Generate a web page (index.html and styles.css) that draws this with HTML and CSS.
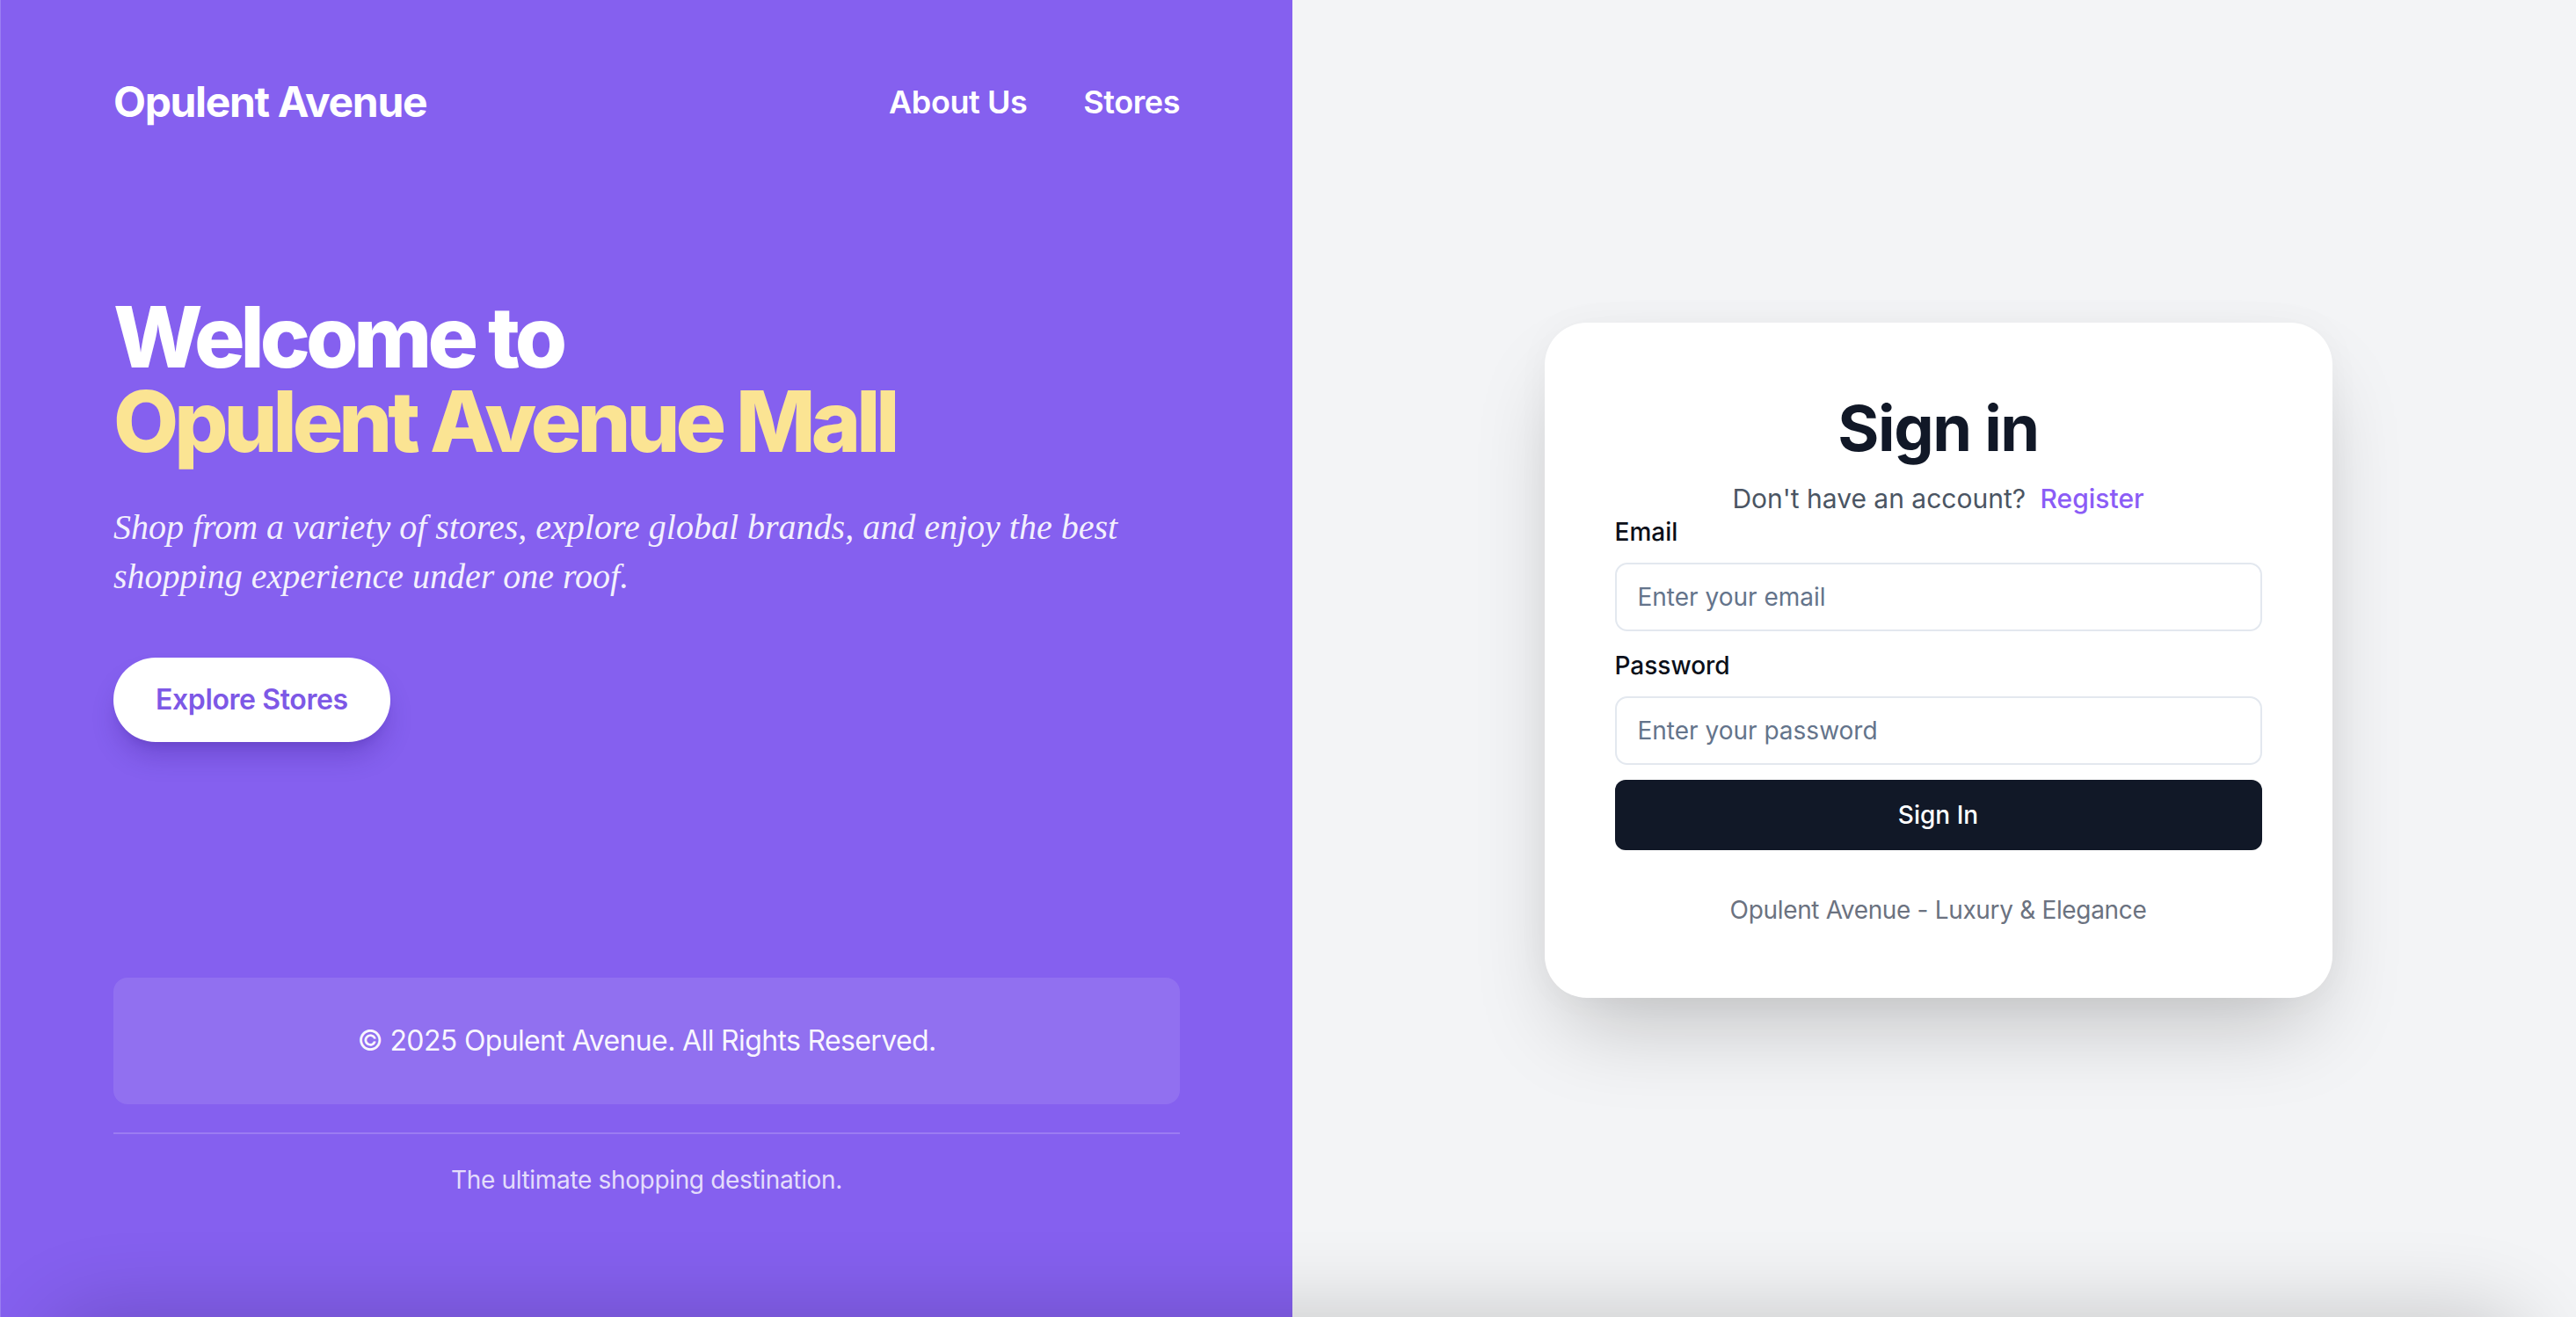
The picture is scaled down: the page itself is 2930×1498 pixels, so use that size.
FILE: index.html
```html
<!DOCTYPE html>
<html lang="en">
<head>
<meta charset="utf-8">
<title>Opulent Avenue - Sign in</title>
<link rel="stylesheet" href="styles.css">
</head>
<body>
<div class="page">
  <section class="hero-panel">
    <header class="topbar">
      <div class="logo">Opulent Avenue</div>
      <nav class="nav">
        <a class="nav-link" href="#">About Us</a>
        <a class="nav-link" href="#">Stores</a>
      </nav>
    </header>
    <div class="hero">
      <h1 class="hero-title"><span class="title-line">Welcome to</span><span class="title-line accent">Opulent Avenue Mall</span></h1>
      <p class="hero-text">Shop from a variety of stores, explore global brands, and enjoy the best shopping experience under one roof.</p>
      <a class="explore-btn" href="#">Explore Stores</a>
    </div>
    <footer class="hero-footer">
      <div class="copyright">© 2025 Opulent Avenue. All Rights Reserved.</div>
      <div class="tagline">The ultimate shopping destination.</div>
    </footer>
  </section>
  <section class="auth-panel">
    <div class="card">
      <h2 class="card-title">Sign in</h2>
      <p class="card-sub">Don't have an account? <a class="register" href="#">Register</a></p>
      <form class="form">
        <div class="field">
          <label class="label" for="email">Email</label>
          <input class="input" id="email" type="email" placeholder="Enter your email">
        </div>
        <div class="field field-pw">
          <label class="label" for="password">Password</label>
          <input class="input" id="password" type="password" placeholder="Enter your password">
        </div>
        <button class="submit" type="button">Sign In</button>
      </form>
      <p class="card-foot">Opulent Avenue - Luxury &amp; Elegance</p>
    </div>
  </section>
  <div class="bottom-shadow"></div>
</div>
</body>
</html>
```

FILE: styles.css
```css
* { box-sizing: border-box; }
html, body { margin: 0; padding: 0; }
body {
  font-family: Inter, "Noto Sans", sans-serif;
  overflow: hidden;
  background: #f3f4f6;
}
a { text-decoration: none; }

.page {
  position: relative;
  display: flex;
  width: 2930px;
  height: 1498px;
  overflow: hidden;
}

/* Left hero panel */
.hero-panel {
  width: 1470px;
  flex: none;
  display: flex;
  flex-direction: column;
  background: #8560ef;
  border-left: 1px solid #9a7ef2;
  padding: 84px 128px 136px 128px;
  color: #fff;
}
.topbar {
  display: flex;
  align-items: center;
  justify-content: space-between;
  height: 64px;
}
.logo {
  font-size: 48px;
  line-height: 64px;
  font-weight: 700;
  letter-spacing: -0.028em;
}
.nav { display: flex; gap: 64px; }
.nav-link {
  color: #fff;
  font-size: 36px;
  line-height: 56px;
  font-weight: 600;
  letter-spacing: -0.012em;
}
.hero { margin-top: 187px; }
.hero-title {
  margin: 0;
  font-size: 96px;
  line-height: 96px;
  font-weight: 800;
  letter-spacing: -0.052em;
}
.title-line { display: block; height: 96px; }
.accent { color: #fbe493; }
.hero-text {
  margin: 45px 0 0;
  font-family: "Liberation Serif", serif;
  font-style: italic;
  font-size: 40px;
  line-height: 56px;
  color: rgba(255,255,255,0.92);
}
.explore-btn {
  display: inline-block;
  margin-top: 64px;
  padding: 24px 48px;
  background: #fff;
  color: #7d58e6;
  border-radius: 999px;
  font-size: 32px;
  line-height: 48px;
  font-weight: 600;
  letter-spacing: -0.012em;
  box-shadow: 0 20px 30px -6px rgba(40,10,120,0.25), 0 8px 12px -8px rgba(40,10,120,0.2);
}
.hero-footer { margin-top: auto; }
.copyright {
  background: rgba(255,255,255,0.1);
  border-radius: 16px;
  padding: 48px;
  text-align: center;
  font-size: 32px;
  line-height: 48px;
  letter-spacing: -0.02em;
  color: rgba(255,255,255,0.95);
}
.tagline {
  margin-top: 32px;
  border-top: 2px solid rgba(255,255,255,0.18);
  padding-top: 32px;
  text-align: center;
  font-size: 28px;
  line-height: 40px;
  letter-spacing: -0.012em;
  color: rgba(255,255,255,0.8);
}

/* Right auth panel */
.auth-panel {
  flex: 1;
  display: flex;
  align-items: center;
  justify-content: center;
  padding-left: 9px;
  padding-top: 4px;
  background: #f3f4f6;
}
.card {
  width: 896px;
  background: #fff;
  border-radius: 48px;
  padding: 80px;
  box-shadow: 0 50px 100px -24px rgba(0,0,0,0.22), 0 0 40px rgba(0,0,0,0.03);
}
.card-title {
  margin: 0;
  text-align: center;
  font-size: 72px;
  line-height: 80px;
  font-weight: 700;
  letter-spacing: -0.02em;
  color: #111827;
}
.card-sub {
  margin: 22px 0 0;
  text-align: center;
  font-size: 30px;
  line-height: 36px;
  color: #4b5563;
}
.register {
  color: #8b5cf6;
  font-weight: 500;
  margin-left: 8px;
}
.form { display: flex; flex-direction: column; }
.field { display: flex; flex-direction: column; gap: 15px; }
.field-pw { margin-top: 19px; }
.label {
  font-size: 28px;
  line-height: 40px;
  font-weight: 500;
  color: #0b0f19;
}
.input {
  height: 78px;
  border: 2px solid #e3e8ef;
  border-radius: 14px;
  padding: 0 24px;
  font-family: Inter, "Noto Sans", sans-serif;
  font-size: 28px;
  color: #111827;
  background: #fff;
  outline: none;
}
.input::placeholder { color: #64748b; }
.submit {
  margin-top: 17px;
  height: 80px;
  border: 0;
  border-radius: 12px;
  background: #111827;
  color: #fff;
  font-family: Inter, "Noto Sans", sans-serif;
  font-size: 28px;
  font-weight: 500;
}
.card-foot {
  margin: 48px 0 0;
  text-align: center;
  font-size: 28px;
  line-height: 40px;
  letter-spacing: -0.012em;
  color: #6b7280;
}

/* soft shadow from an element just below the fold */
.bottom-shadow {
  position: absolute;
  left: 60px;
  right: 60px;
  top: 100%;
  height: 400px;
  border-radius: 48px;
  box-shadow: 0 0 100px rgba(0,0,0,0.2);
  pointer-events: none;
}
```
